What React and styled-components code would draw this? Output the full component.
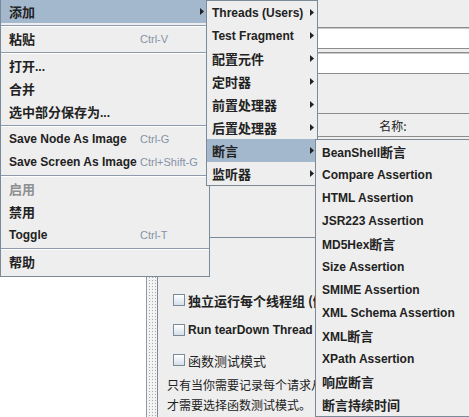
import React from 'react'
import styled, { createGlobalStyle } from 'styled-components'

const GlobalStyle = createGlobalStyle`
  html, body {
    margin: 0;
    padding: 0;
  }

  body {
    background: #eeeeee;
    font-family: 'Liberation Sans', Arial, 'Noto Sans CJK SC', sans-serif;
    font-size: 12px;
    color: #222;
  }
`

const CJK = `'Noto Sans CJK SC', 'Liberation Sans', sans-serif`

const Window = styled.div`
  position: relative;
  display: flex;
  width: 469px;
  height: 417px;
  overflow: hidden;
  background: #eeeeee;
`

const TreePane = styled.div`
  flex: none;
  width: 146px;
  background: #fff;
`

const Divider = styled.div`
  flex: none;
  width: 10px;
  border-left: 1px solid #8d9aab;
  background-color: #f3f3f3;
  background-image: radial-gradient(#a9a9a9 0.7px, transparent 0.9px);
  background-size: 3px 3px;
  background-position: 1px 0;
`

const Editor = styled.div`
  flex: none;
  width: 620px;
  border-left: 1px solid #7a8a99;
  display: flex;
  flex-direction: column;
  padding-top: 27px;
  white-space: nowrap;
`

const Field = styled.div`
  height: 20px;
  margin-left: 58px;
  width: 540px;
  background: #fff;
  border: 1px solid #8c8c8c;
  box-shadow: inset 0 1px 0 #c9c9c9;

  & + & {
    margin-top: 3px;
  }
`

const TableHeader = styled.div`
  display: flex;
  margin-top: 39px;
  height: 22px;
  border-top: 1px solid #8c8c8c;
  border-bottom: 1px solid #8c8c8c;
`

const HeaderCell = styled.div`
  flex: none;
  width: ${p => p.$width}px;
  display: flex;
  align-items: center;
  justify-content: center;
  font-family: ${CJK};
  font-size: 12px;
  color: #222;
`

const TableBody = styled.div`
  height: 100px;
  border-bottom: 1px solid #7a8a99;
`

const Options = styled.div`
  display: flex;
  flex-direction: column;
  margin-top: 47px;
`

const CheckRow = styled.div`
  display: flex;
  align-items: center;
  height: 30px;
  padding-left: 15px;
  gap: 3px;
`

const Box = styled.span`
  flex: none;
  width: 10px;
  height: 10px;
  border: 1px solid #7a8a99;
  background: linear-gradient(#ffffff, #d5dfea);
`

const CheckLabel = styled.span`
  font-family: ${p => (p.$cjk ? CJK : `'Liberation Sans', Arial, sans-serif`)};
  font-size: ${p => (p.$cjk ? 13 : 12)}px;
  font-weight: ${p => (p.$bold ? 'bold' : 'normal')};
  color: #222;
`

const Note = styled.div`
  padding-left: 9px;
  font-family: ${CJK};
  font-size: 12px;
  line-height: 20px;
  color: #222;
`

const Popup = styled.div`
  position: absolute;
  left: ${p => p.$left}px;
  top: ${p => p.$top}px;
  width: ${p => p.$width}px;
  box-sizing: border-box;
  background: #eeeeee;
  border: 1px solid #7a8a99;
  padding-bottom: ${p => p.$padBottom || 0}px;
`

const Item = styled.div`
  display: flex;
  align-items: center;
  height: 23px;
  padding-left: ${p => p.$indent}px;
  padding-right: ${p => p.$arrowGap || 0}px;
  background: ${p => (p.$active ? '#a3b8cc' : 'transparent')};
  color: ${p => (p.$disabled ? '#8e8f91' : '#222')};
  font-family: 'Liberation Sans', Arial, sans-serif;
  font-weight: bold;
  font-size: 12px;
  white-space: nowrap;
`

const Label = styled.span`
  flex: none;
  width: ${p => (p.$width ? `${p.$width}px` : 'auto')};
`

const Cjk = styled.span`
  font-family: ${CJK};
  font-size: 13px;
`

const Accel = styled.span`
  font-weight: normal;
  font-size: 11px;
  color: #8593a6;
`

const Separator = styled.div`
  margin-top: 2px;
  border-top: 1px solid #8d9bad;
  border-bottom: 1px solid #ffffff;
`

const ArrowIcon = styled.svg`
  flex: none;
  margin-left: auto;
`

const Arrow = () => (
  <ArrowIcon width="4" height="7" viewBox="0 0 4 7">
    <polygon points="0,0 4,3.5 0,7" fill="#222" />
  </ArrowIcon>
)

// text with CJK runs rendered at the CJK size
const Text = ({ children }) => {
  const parts = children.split(/([\u3000-\u9fff\uff00-\uffef]+)/).filter(Boolean)
  return parts.map((p, i) =>
    /[\u3000-\u9fff\uff00-\uffef]/.test(p) ? <Cjk key={i}>{p}</Cjk> : <span key={i}>{p}</span>
  )
}

const mainMenu = [
  { label: '添加', sub: true, active: true },
  'sep',
  { label: '粘贴', accel: 'Ctrl-V' },
  'sep',
  { label: '打开...' },
  { label: '合并' },
  { label: '选中部分保存为...' },
  'sep',
  { label: 'Save Node As Image', accel: 'Ctrl-G' },
  { label: 'Save Screen As Image', accel: 'Ctrl+Shift-G' },
  'sep',
  { label: '启用', disabled: true },
  { label: '禁用' },
  { label: 'Toggle', accel: 'Ctrl-T' },
  'sep',
  { label: '帮助' }
]

const addMenu = [
  'Threads (Users)',
  'Test Fragment',
  '配置元件',
  '定时器',
  '前置处理器',
  '后置处理器',
  '断言',
  '监听器'
]

const assertions = [
  'BeanShell断言',
  'Compare Assertion',
  'HTML Assertion',
  'JSR223 Assertion',
  'MD5Hex断言',
  'Size Assertion',
  'SMIME Assertion',
  'XML Schema Assertion',
  'XML断言',
  'XPath Assertion',
  '响应断言',
  '断言持续时间'
]

const App = () => (
  <>
    <GlobalStyle />
    <Window>
      <TreePane />
      <Divider />
      <Editor>
        <Field />
        <Field />
        <TableHeader>
          <HeaderCell $width={470}>名称:</HeaderCell>
          <HeaderCell $width={150}>值</HeaderCell>
        </TableHeader>
        <TableBody />
        <Options>
          <CheckRow>
            <Box />
            <CheckLabel $cjk $bold>独立运行每个线程组 (例如在一个组运行结束后启动下一个)</CheckLabel>
          </CheckRow>
          <CheckRow>
            <Box />
            <CheckLabel $bold>Run tearDown Thread Groups after shutdown of main threads</CheckLabel>
          </CheckRow>
          <CheckRow>
            <Box />
            <CheckLabel $cjk>函数测试模式</CheckLabel>
          </CheckRow>
        </Options>
        <Note>
          只有当你需要记录每个请求从服务器取得的数据到文件时
          <br />
          才需要选择函数测试模式。
        </Note>
      </Editor>

      <Popup $left={0} $top={-1} $width={210} $padBottom={3}>
        {mainMenu.map((m, i) =>
          m === 'sep' ? (
            <Separator key={i} />
          ) : (
            <Item key={i} $indent={8} $arrowGap={5} $active={m.active} $disabled={m.disabled}>
              <Label $width={m.accel ? 131 : 0}>
                <Text>{m.label}</Text>
              </Label>
              {m.accel && <Accel>{m.accel}</Accel>}
              {m.sub && <Arrow />}
            </Item>
          )
        )}
      </Popup>

      <Popup $left={206} $top={0} $width={112}>
        {addMenu.map(label => (
          <Item key={label} $indent={5} $arrowGap={3} $active={label === '断言'}>
            <Label>
              <Text>{label}</Text>
            </Label>
            <Arrow />
          </Item>
        ))}
      </Popup>

      <Popup $left={315} $top={139} $width={180}>
        {assertions.map(label => (
          <Item key={label} $indent={6}>
            <Label>
              <Text>{label}</Text>
            </Label>
          </Item>
        ))}
      </Popup>
    </Window>
  </>
)

export default App
